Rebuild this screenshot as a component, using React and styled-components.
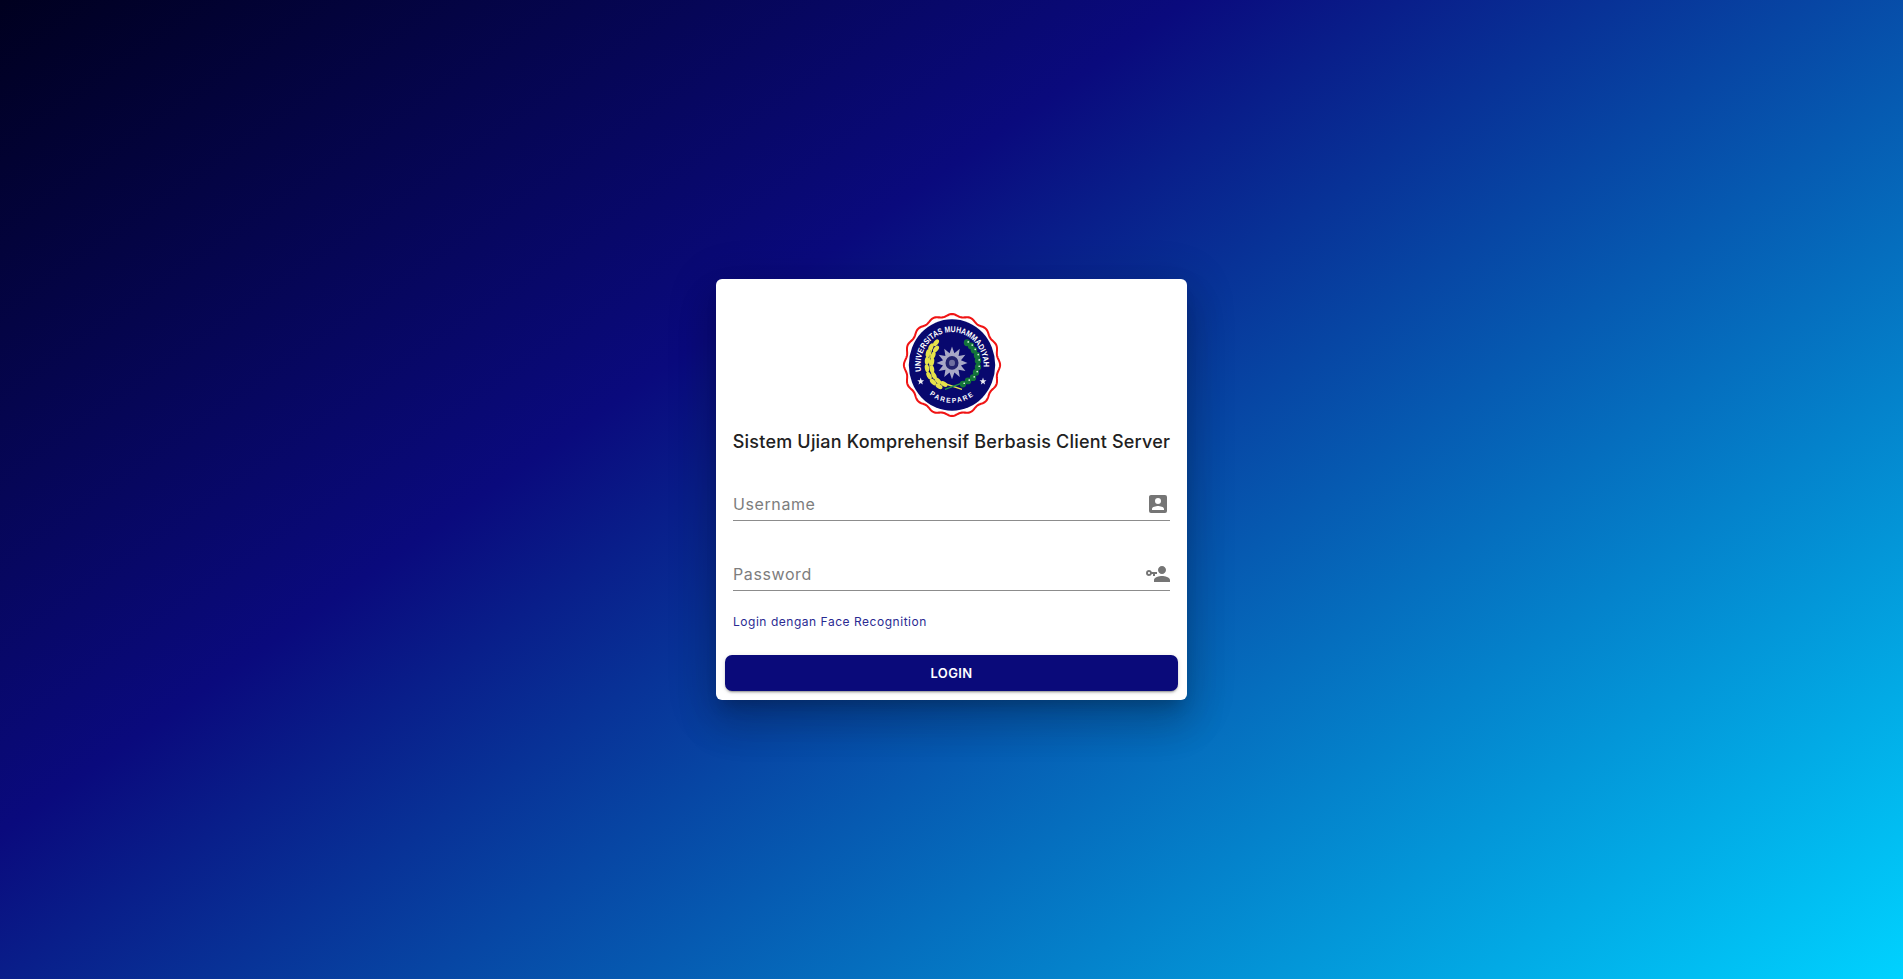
import React from "react";
import styled, { createGlobalStyle } from "styled-components";

const GlobalStyle = createGlobalStyle`
  * { box-sizing: border-box; }
  html, body { margin: 0; padding: 0; height: 100%; }
  body { font-family: Inter, "Open Sans", sans-serif; }
`;

const Page = styled.main`
  min-height: 100vh;
  display: flex;
  align-items: center;
  justify-content: center;
  background: linear-gradient(145deg, #00001f 0%, #0a0a7d 36%, #00d2ff 100%);
`;

const Card = styled.form`
  width: 471px;
  height: 421px;
  padding: 33px 9px 9px;
  display: flex;
  flex-direction: column;
  background: #fff;
  border-radius: 6px;
  box-shadow: 0 11px 15px -7px rgba(0, 0, 0, 0.2), 0 24px 38px 3px rgba(0, 0, 0, 0.14),
    0 9px 46px 8px rgba(0, 0, 0, 0.12);
`;

const LogoWrap = styled.div`
  display: flex;
  justify-content: center;
  height: 106px;
`;

const Title = styled.h1`
  margin: 10px 0 0;
  height: 28px;
  font-size: 18px;
  line-height: 28px;
  font-weight: 500;
  letter-spacing: 0.2px;
  text-align: center;
  white-space: nowrap;
  color: #212121;
`;

const Fields = styled.div`
  margin-top: 25px;
  padding: 0 8px;
  display: flex;
  flex-direction: column;
  gap: 30px;
`;

const Field = styled.label`
  height: 40px;
  display: flex;
  align-items: center;
  border-bottom: 1px solid #8c8c8c;
  padding-top: 7px;
`;

const Input = styled.input`
  flex: 1;
  min-width: 0;
  border: 0;
  outline: 0;
  padding: 0;
  background: transparent;
  font-family: inherit;
  font-size: 16px;
  letter-spacing: 0.6px;
  color: #212121;
  &::placeholder {
    color: #7d7d7d;
    opacity: 1;
  }
`;

const FieldIcon = styled.svg`
  width: 24px;
  height: 24px;
  fill: #757575;
  flex: none;
`;

const FaceLink = styled.a`
  margin: 21px 8px 0;
  height: 20px;
  font-size: 12px;
  line-height: 20px;
  letter-spacing: 0.53px;
  color: #2a2a92;
  text-decoration: none;
`;

const LoginButton = styled.button`
  margin-top: auto;
  height: 36px;
  border: 0;
  border-radius: 7px;
  background: #0a0a7a;
  color: #fff;
  font-family: inherit;
  font-size: 13px;
  font-weight: 600;
  letter-spacing: 0.4px;
  box-shadow: 0 3px 1px -2px rgba(0, 0, 0, 0.2), 0 2px 2px 0 rgba(0, 0, 0, 0.14),
    0 1px 5px 0 rgba(0, 0, 0, 0.12);
`;

// wavy rim of the seal: 16 tips around the circle
const sealEdge = () => {
  const pts = [];
  for (let i = 0; i < 320; i++) {
    const a = (i / 320) * Math.PI * 2;
    const r = 47 + 1.1 * Math.cos(a * 16);
    pts.push(`${(50 + r * Math.sin(a)).toFixed(2)} ${(52 - r * Math.cos(a)).toFixed(2)}`);
  }
  return `M${pts.join("L")}Z`;
};

const starPoints = (cx, cy, r, n = 5, inner = 0.42) => {
  const out = [];
  for (let i = 0; i < n * 2; i++) {
    const a = (i / (n * 2)) * Math.PI * 2 - Math.PI / 2;
    const rr = i % 2 ? r * inner : r;
    out.push(`${(cx + rr * Math.cos(a)).toFixed(2)},${(cy + rr * Math.sin(a)).toFixed(2)}`);
  }
  return out.join(" ");
};

const wheatLeaves = [
  [34, 31, 40],
  [29, 35, 30],
  [34, 37, 40],
  [26, 41, 15],
  [31, 43, 25],
  [25, 48, 5],
  [30, 49, 10],
  [25, 55, -10],
  [30, 56, -10],
  [27, 62, -30],
  [32, 62, -30],
  [31, 68, -45],
  [36, 67, -45],
  [37, 72, -60],
  [42, 70, -60],
];

const riceGrains = [
  [65, 31],
  [69, 34],
  [72, 38],
  [75, 43],
  [76, 48],
  [76, 54],
  [74, 59],
  [71, 64],
  [66, 67],
  [61, 70],
];

const Logo = () => (
  <svg width="100" height="106" viewBox="0 2 100 100" preserveAspectRatio="none">
    <path d={sealEdge()} fill="#fff" stroke="#f01414" strokeWidth="2" />
    <circle cx="50" cy="52" r="43.2" fill="#08086e" />
    <defs>
      <path id="topArc" d="M19 58 A31.5 31.5 0 1 1 81 58" />
      <path id="bottomArc" d="M22.5 75 A36 36 0 0 0 77.5 75" />
    </defs>
    <text fontFamily="Liberation Sans, sans-serif" fontSize="8" fontWeight="700" fill="#fff">
      <textPath
        href="#topArc"
        startOffset="0"
        textLength="106"
        lengthAdjust="spacingAndGlyphs"
      >
        UNIVERSITAS MUHAMMADIYAH
      </textPath>
    </text>
    <text
      fontFamily="Liberation Sans, sans-serif"
      fontSize="6.6"
      fontWeight="700"
      letterSpacing="1.6"
      fill="#fff"
    >
      <textPath href="#bottomArc" startOffset="50%" textAnchor="middle">
        PAREPARE
      </textPath>
    </text>
    <polygon points={starPoints(18.7, 67.5, 3.6)} fill="#eeeef4" />
    <polygon points={starPoints(81, 67.5, 3.6)} fill="#eeeef4" />
    <polygon points={starPoints(50, 50, 15.5, 12, 0.6)} fill="#a8a8c6" />
    <circle cx="50" cy="50" r="6.5" fill="#22226e" />
    <circle cx="50" cy="50" r="3" fill="#6f6fa0" />
    <path d="M30 36 C25 50 27 60 38 68 L60 75" stroke="#e6e24a" strokeWidth="1.4" fill="none" />
    <g fill="#e6e24a">
      {wheatLeaves.map(([x, y, rot]) => (
        <ellipse key={`${x}-${y}`} cx={x} cy={y} rx="2.2" ry="3.8" transform={`rotate(${rot} ${x} ${y})`} />
      ))}
    </g>
    <path d="M64 30 C78 40 80 58 66 67 L43 75" stroke="#1f9a45" strokeWidth="1.2" fill="none" />
    <g fill="#14753a">
      {riceGrains.map(([x, y]) => (
        <circle key={`${x}-${y}`} cx={x} cy={y} r="3.2" />
      ))}
    </g>
    <g fill="#e8f6ea">
      {riceGrains.map(([x, y]) => (
        <circle key={`${x}-${y}`} cx={x + 1.2} cy={y - 0.8} r="0.8" />
      ))}
    </g>
  </svg>
);

const App = () => (
  <>
    <GlobalStyle />
    <Page>
      <Card onSubmit={(e) => e.preventDefault()}>
        <LogoWrap>
          <Logo />
        </LogoWrap>
        <Title>Sistem Ujian Komprehensif Berbasis Client Server</Title>
        <Fields>
          <Field>
            <Input placeholder="Username" />
            <FieldIcon viewBox="0 0 24 24">
              <path d="M6,17C6,15 10,14.1 12,14.1C14,14.1 18,15 18,17V18H6M15,9A3,3 0 0,1 12,12A3,3 0 0,1 9,9A3,3 0 0,1 12,6A3,3 0 0,1 15,9M3,5V19A2,2 0 0,0 5,21H19A2,2 0 0,0 21,19V5A2,2 0 0,0 19,3H5C3.89,3 3,3.9 3,5Z" />
            </FieldIcon>
          </Field>
          <Field>
            <Input placeholder="Password" type="password" />
            <FieldIcon viewBox="0 0 24 24">
              <path d="M11 10V12H9V14H7V12H5.8C5.4 13.2 4.3 14 3 14C1.3 14 0 12.7 0 11S1.3 8 3 8C4.3 8 5.4 8.8 5.8 10H11M3 10C2.4 10 2 10.4 2 11S2.4 12 3 12 4 11.6 4 11 3.6 10 3 10M16 14C18.7 14 24 15.3 24 18V20H8V18C8 15.3 13.3 14 16 14M16 12C13.8 12 12 10.2 12 8S13.8 4 16 4 20 5.8 20 8 18.2 12 16 12Z" />
            </FieldIcon>
          </Field>
        </Fields>
        <FaceLink href="#face">Login dengan Face Recognition</FaceLink>
        <LoginButton type="submit">LOGIN</LoginButton>
      </Card>
    </Page>
  </>
);

export default App;
